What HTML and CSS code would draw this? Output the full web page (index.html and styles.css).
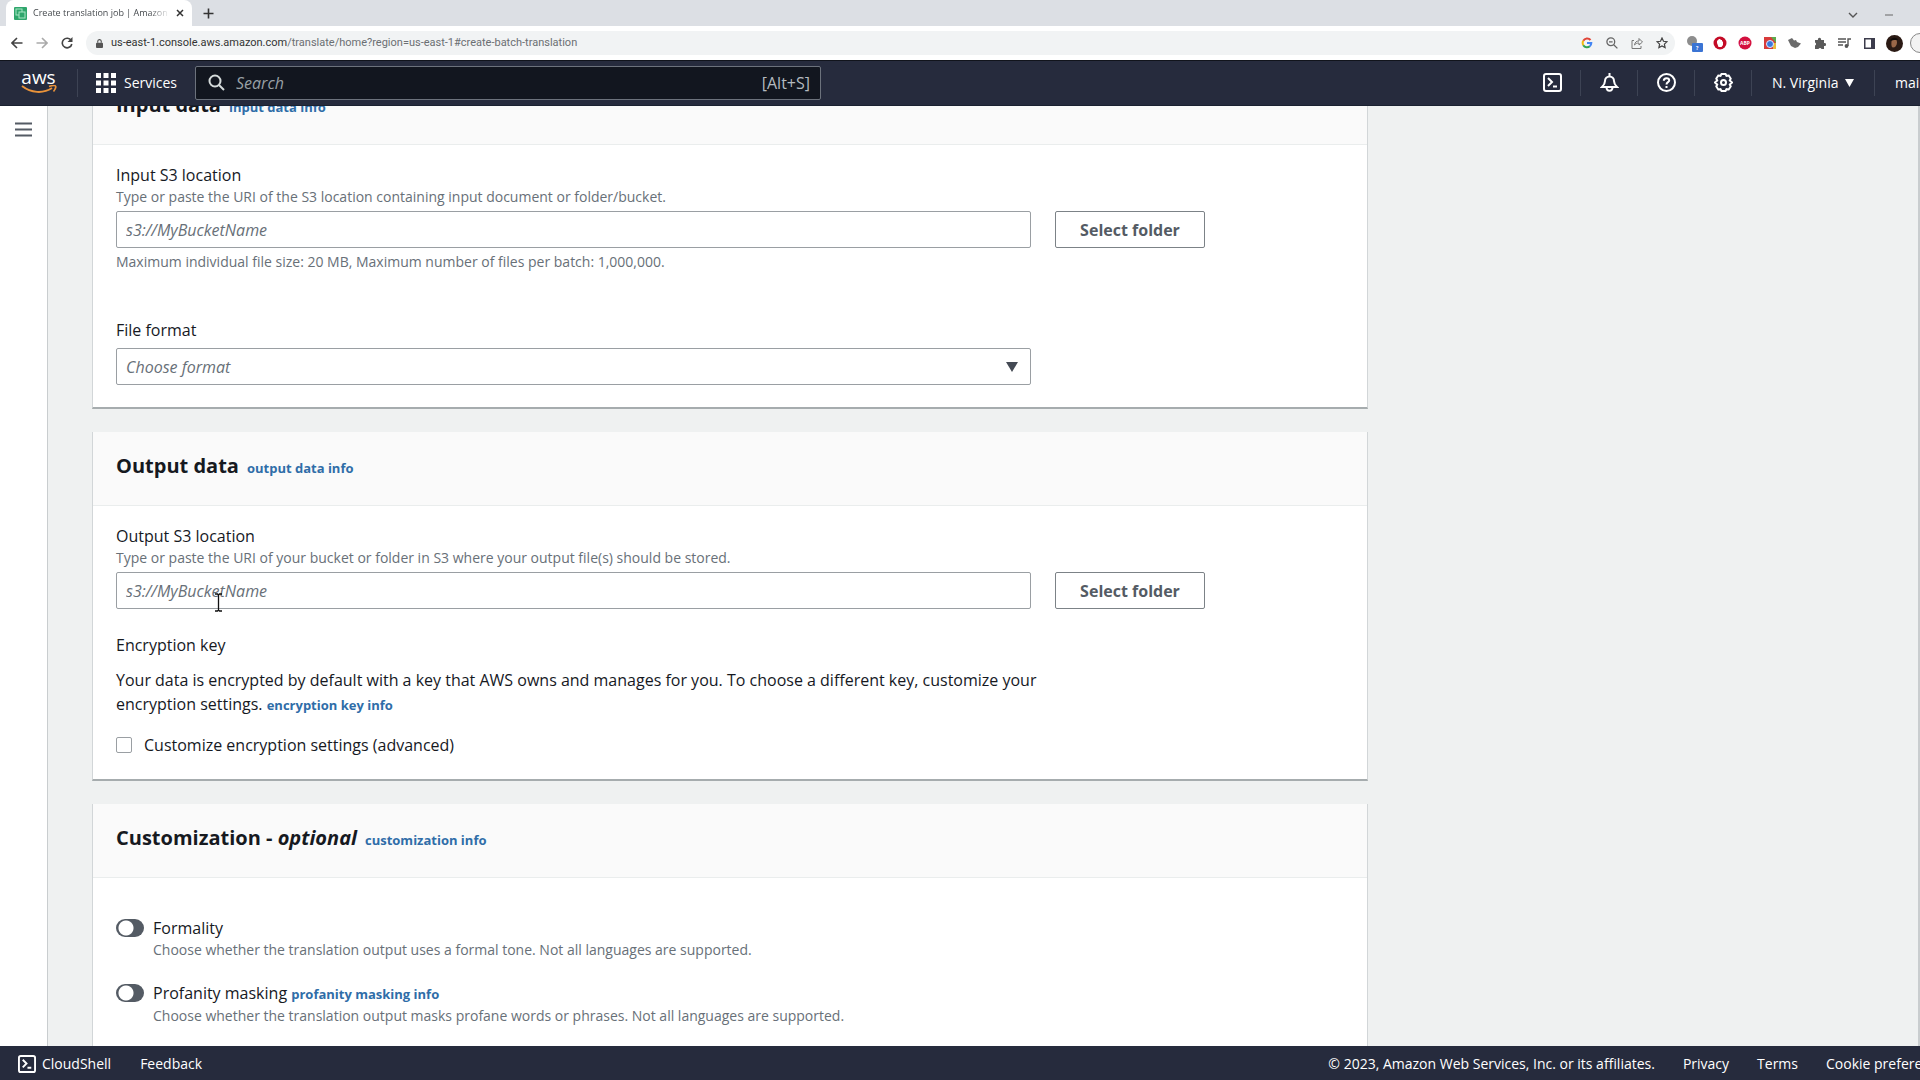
FILE: index.html
```html
<!DOCTYPE html>
<html lang="en">
<head>
    <meta charset="UTF-8">
    <meta name="viewport" content="width=device-width, initial-scale=1.0">
    <title>Create translation job | Amazon Translate</title>
    <link rel="stylesheet" href="styles.css">
</head>
<body>

    <!-- Browser tab strip -->
    <div class="tab-strip">
        <div class="tab">
            <svg width="13" height="13" viewBox="0 0 13 13"><rect width="13" height="13" rx="1" fill="#2fa66c"/><rect x="2" y="2" width="6" height="6" fill="none" stroke="#a8e6c4"/><rect x="5" y="5" width="6" height="6" fill="#2fa66c" stroke="#a8e6c4"/></svg>
            <span class="tab-title">Create translation job | Amazon</span>
            <button class="plain" aria-label="Close tab"><svg width="8" height="8" viewBox="0 0 8 8"><path d="M1 1l6 6M7 1L1 7" stroke="#333" stroke-width="1.5"/></svg></button>
        </div>
        <button class="plain new-tab" aria-label="New tab"><svg width="11" height="11" viewBox="0 0 11 11"><path d="M5.500 0.500v10M0.500 5.500h10" stroke="#333" stroke-width="1.6"/></svg></button>
        <div class="window-buttons">
            <button class="plain" aria-label="Search tabs"><svg width="10" height="10" viewBox="0 0 10 10"><path d="M1 3l4 4 4-4" fill="none" stroke="#555" stroke-width="1.4"/></svg></button>
            <button class="plain" aria-label="Minimize"><svg width="10" height="10" viewBox="0 0 10 10"><path d="M1 5h8" stroke="#666"/></svg></button>
        </div>
    </div>

    <!-- Browser toolbar -->
    <div class="toolbar">
        <button class="plain" aria-label="Back"><svg width="12" height="12" viewBox="0 0 12 12"><path d="M11.500 6H1.500M6 1L1 6l5 5" fill="none" stroke="#444" stroke-width="1.600"/></svg></button>
        <button class="plain" aria-label="Forward"><svg width="12" height="12" viewBox="0 0 12 12"><path d="M.5 6h10M6 1l5 5-5 5" fill="none" stroke="#aaa" stroke-width="1.600"/></svg></button>
        <button class="plain" aria-label="Reload"><svg width="12" height="12" viewBox="0 0 12 12"><path d="M10.200 3.500A4.800 4.800 0 1 0 10.800 7" fill="none" stroke="#444" stroke-width="1.600"/><path d="M11.500 0v5h-5z" fill="#444"/></svg></button>
        <div class="address">
            <svg width="7" height="9" viewBox="0 0 8 10"><rect y="4" width="8" height="6" rx="1" fill="#555"/><path d="M2 4V2.500a2 2 0 0 1 4 0V4" fill="none" stroke="#555" stroke-width="1.300"/></svg>
            <span class="url">us-east-1.console.aws.amazon.com<span>/translate/home?region=us-east-1#create-batch-translation</span></span>
            <div class="address-icons">
                <svg width="12" height="12" viewBox="0 0 12 12" fill="none" stroke-width="2"><path d="M9.500 3A4.300 4.300 0 0 0 2.300 3.800" stroke="#e04437"/><path d="M2.300 3.800a4.300 4.300 0 0 0 0 4.400" stroke="#f2b90f"/><path d="M2.300 8.200a4.300 4.300 0 0 0 6.500 1" stroke="#34a353"/><path d="M8.800 9.200A4.300 4.300 0 0 0 10.300 6H6" stroke="#4285f4"/></svg>
                <svg width="12" height="12" viewBox="0 0 12 12" fill="none" stroke="#666" stroke-width="1.300"><circle cx="4.800" cy="4.800" r="3.900"/><path d="M3 4.800h3.600M7.700 7.700l3.700 3.700"/></svg>
                <svg width="12" height="12" viewBox="0 0 12 12" fill="none" stroke="#777"><path d="M3 3.500H1v8h9V9"/><path d="M3.500 8c.5-3 2-4 4.500-4V1.500L11.500 5 8 8V6C6 6 5 6.500 3.500 8z"/></svg>
                <svg width="12" height="12" viewBox="0 0 12 12" fill="none" stroke="#444" stroke-width="1.200"><path d="M6 1l1.500 3.300 3.500.4-2.600 2.400.7 3.500L6 8.900l-3.100 1.700.7-3.500L1 4.700l3.500-.4z"/></svg>
            </div>
        </div>
        <div class="extensions">
            <svg width="17" height="17" viewBox="0 0 17 17"><circle cx="6" cy="6" r="5" fill="#8d8d8d"/><rect x="6" y="8" width="11" height="9" rx="1" fill="#3b74d4"/><text x="10" y="15" class="badge-text">?</text></svg>
            <svg width="14" height="14" viewBox="0 0 14 14"><circle cx="7" cy="7" r="6.500" fill="#c40b26"/><path d="M4 7V4.500h1V3.500h1V3h1v.5h1v.5h1v1.500h1V9l-1.500 2h-3z" fill="#fff"/></svg>
            <svg width="14" height="14" viewBox="0 0 14 14"><circle cx="7" cy="7" r="6.500" fill="#d3103f"/><text x="2" y="9" class="badge-text">ABP</text></svg>
            <svg width="12" height="12" viewBox="0 0 12 12"><rect width="12" height="12" fill="#d83b3b"/><path d="M7 0h5v6z" fill="#5cab4c"/><path d="M9 6h3v6H9z" fill="#e8bd3b"/><circle cx="6" cy="7" r="3.500" fill="#3c78dc" stroke="#dfe8ff"/></svg>
            <svg width="13" height="12" viewBox="0 0 13 12"><path d="M0 3l4-2 2 2.500L8 3l1 2 4 1.500L10 10l-3 1-4-2z" fill="#6b6b6b"/></svg>
            <svg width="12" height="12" viewBox="0 0 12 12"><path d="M1 3h3a1.600 1.600 0 1 1 3 0h3v3a1.600 1.600 0 1 1 0 3v3H7.500a1.600 1.600 0 0 0-3 0H1V8.500a1.600 1.600 0 0 0 0-3z" fill="#5a5a5a"/></svg>
            <svg width="13" height="12" viewBox="0 0 13 12"><path d="M0 2h8M0 5h8M0 8h5M10 9V2h3" fill="none" stroke="#555" stroke-width="1.400"/><circle cx="8.500" cy="9" r="1.900" fill="#555"/></svg>
            <svg width="11" height="11" viewBox="0 0 11 11"><rect x=".75" y=".75" width="9.500" height="9.500" fill="none" stroke="#3c3c4c" stroke-width="1.500"/><path d="M7 1h4v9H7z" fill="#3c3c4c"/></svg>
            <svg width="17" height="17" viewBox="0 0 17 17"><circle cx="8.500" cy="8.500" r="8.500" fill="#2b1a14"/><path d="M6 4.500c3-2 5 0 5 3s-2 5-4 5-2-5-1-8z" fill="#9b6748"/><path d="M4 6c1-4 7-4 8-1L8 5z" fill="#120d0b"/></svg>
        </div>
        <button class="update" aria-label="Update"></button>
    </div>

    <!-- AWS navigation -->
    <header class="aws-nav">
        <a href="#" class="logo" aria-label="AWS home">
            <span>aws</span>
            <svg width="36" height="9" viewBox="0 0 36 9"><path d="M1 1c9 7 21 8 30 2" fill="none" stroke="#e8923a" stroke-width="2"/><path d="M28 1.500c3-1 6-1 6.500-.5s0 3-2 5.500" fill="none" stroke="#e8923a" stroke-width="1.600"/></svg>
        </a>
        <button class="plain services">
            <svg width="20" height="20" viewBox="0 0 20 20" fill="#fff"><path d="M0 0h5v5H0zM7.500 0h5v5h-5zM15 0h5v5h-5zM0 7.500h5v5H0zM7.500 7.500h5v5h-5zM15 7.500h5v5h-5zM0 15h5v5H0zM7.500 15h5v5h-5zM15 15h5v5h-5z"/></svg>
            Services
        </button>
        <label class="search">
            <svg width="17" height="17" viewBox="0 0 17 17" fill="none" stroke="#d5dbdb" stroke-width="2"><circle cx="7" cy="7" r="5.500"/><path d="M11 11l5 5"/></svg>
            <input type="search" placeholder="Search" aria-label="Search">
            <span>[Alt+S]</span>
        </label>
        <div class="nav-right">
            <button class="plain nav-icon" aria-label="CloudShell"><svg width="19" height="19" viewBox="0 0 19 19" fill="none" stroke="#fff" stroke-width="2"><rect x="1" y="1" width="17" height="17" rx="2"/><path d="M5 5l4 4-4 4M10 13.500h4"/></svg></button>
            <button class="plain nav-icon" aria-label="Notifications"><svg width="19" height="19" viewBox="0 0 19 19" fill="none" stroke="#fff" stroke-width="2"><path d="M9.500 0v3M2 14c2-2 3-3 3-6a4.500 4.500 0 0 1 9 0c0 3 1 4 3 6zM6.500 14c0 5 6 5 6 0"/></svg></button>
            <button class="plain nav-icon" aria-label="Help"><svg width="19" height="19" viewBox="0 0 19 19" fill="none" stroke="#fff" stroke-width="2"><circle cx="9.500" cy="9.500" r="8.500"/><path d="M6.800 7.800c0-3.700 5.400-3.300 5.400-.4 0 1.800-2.700 1.800-2.700 4M9.500 13v2"/></svg></button>
            <button class="plain nav-icon" aria-label="Settings"><svg width="19" height="19" viewBox="0 0 19 19" fill="none" stroke="#fff" stroke-width="2"><path d="M7.500 1h4l1 1.800 2.200-.3 2 3-.9 2 2.200 2-2.200 2 .9 2-2 3-2.200-.3-1 1.800h-4l-1-1.800-2.200.3-2-3 .9-2-2.200-2 2.200-2-.9-2 2-3 2.200.3z"/><circle cx="9.500" cy="9.500" r="2.500"/></svg></button>
            <button class="plain region">N. Virginia <svg width="9" height="8" viewBox="0 0 9 8"><path d="M0 0h9L4.500 8z" fill="#fff"/></svg></button>
            <button class="plain account">main</button>
        </div>
    </header>

    <div class="page">
        <aside class="side-nav">
            <button class="plain" aria-label="Open navigation"><svg width="17" height="15" viewBox="0 0 17 15"><path d="M0 1.500h17M0 7.500h17M0 13.500h17" stroke="#545b64" stroke-width="2"/></svg></button>
        </aside>

        <main>
            <form>
                <!-- Input data -->
                <section class="panel">
                    <div class="panel-header">
                        <h2>Input data</h2>
                        <a href="#">input data info</a>
                    </div>
                    <div class="panel-body">
                        <label for="input-location">Input S3 location</label>
                        <p class="hint">Type or paste the URI of the S3 location containing input document or folder/bucket.</p>
                        <div class="field-row">
                            <div class="field"><input type="text" id="input-location" placeholder="s3://MyBucketName"></div>
                            <button type="button" class="select-folder">Select folder</button>
                        </div>
                        <p class="hint constraint">Maximum individual file size: 20 MB, Maximum number of files per batch: 1,000,000.</p>
                        <label for="file-format" class="format-label">File format</label>
                        <div class="field">
                            <select id="file-format">
                                <option>Choose format</option>
                            </select>
                            <svg class="caret" width="12" height="10" viewBox="0 0 12 10"><path d="M0 0h12L6 10z" fill="#444a54"/></svg>
                        </div>
                    </div>
                </section>

                <!-- Output data -->
                <section class="panel">
                    <div class="panel-header">
                        <h2>Output data</h2>
                        <a href="#">output data info</a>
                    </div>
                    <div class="panel-body">
                        <label for="output-location">Output S3 location</label>
                        <p class="hint">Type or paste the URI of your bucket or folder in S3 where your output file(s) should be stored.</p>
                        <div class="field-row">
                            <div class="field">
                                <input type="text" id="output-location" placeholder="s3://MyBucketName">
                                <svg class="cursor" width="9" height="19" viewBox="0 0 9 19"><path d="M1 1h2.500l1 1 1-1H8M4.500 2v15M1 18h2.500l1-1 1 1H8" fill="none" stroke="#111" stroke-width="1.300"/></svg>
                            </div>
                            <button type="button" class="select-folder">Select folder</button>
                        </div>
                        <h3>Encryption key</h3>
                        <p class="description">Your data is encrypted by default with a key that AWS owns and manages for you. To choose a different key, customize your encryption settings. <a href="#">encryption key info</a></p>
                        <label class="check">
                            <input type="checkbox">
                            Customize encryption settings (advanced)
                        </label>
                    </div>
                </section>

                <!-- Customization -->
                <section class="panel">
                    <div class="panel-header">
                        <h2>Customization - <em>optional</em></h2>
                        <a href="#">customization info</a>
                    </div>
                    <div class="panel-body toggles">
                        <div class="toggle">
                            <input type="checkbox" role="switch" id="formality">
                            <div>
                                <label for="formality">Formality</label>
                                <p class="hint">Choose whether the translation output uses a formal tone. Not all languages are supported.</p>
                            </div>
                        </div>
                        <div class="toggle">
                            <input type="checkbox" role="switch" id="profanity">
                            <div>
                                <label for="profanity">Profanity masking</label> <a href="#">profanity masking info</a>
                                <p class="hint">Choose whether the translation output masks profane words or phrases. Not all languages are supported.</p>
                            </div>
                        </div>
                    </div>
                </section>
            </form>
        </main>
    </div>

    <footer>
        <a href="#" class="cloudshell"><svg width="18" height="18" viewBox="0 0 19 19" fill="none" stroke="#fff" stroke-width="2"><rect x="1" y="1" width="17" height="17" rx="2"/><path d="M5 5l4 4-4 4M10 13.500h4"/></svg>CloudShell</a>
        <a href="#">Feedback</a>
        <div class="legal">
            <span>© 2023, Amazon Web Services, Inc. or its affiliates.</span>
            <a href="#">Privacy</a>
            <a href="#">Terms</a>
            <a href="#" class="cookies">Cookie preferences</a>
        </div>
    </footer>

</body>
</html>
```
FILE: styles.css
```css
* {
    box-sizing: border-box;
}
body {
    display: flex;
    flex-direction: column;
    height: 100vh;
    margin: 0;
    overflow: hidden;
    font-family: "Open Sans", "Noto Sans", sans-serif;
    font-size: 16px;
    line-height: 24px;
    color: #16191f;
    background-color: #eff1f1;
}
svg {
    flex: none;
}
a {
    color: #2f6da8;
    text-decoration: none;
}
h2, h3, p {
    margin: 0;
}
input, select, button {
    font-family: inherit;
    font-size: inherit;
}
.plain {
    display: flex;
    align-items: center;
    padding: 0;
    border: none;
    background: none;
    color: inherit;
}

/* Browser */
.tab-strip {
    display: flex;
    align-items: flex-end;
    flex: none;
    height: 26px;
    background-color: #dcdfe4;
}
.tab {
    display: flex;
    align-items: center;
    gap: 6px;
    width: 186px;
    height: 26px;
    margin-left: 6px;
    padding: 0 8px;
    border-radius: 8px 8px 0 0;
    background-color: #fff;
}
.tab-title {
    flex: 1;
    overflow: hidden;
    white-space: nowrap;
    font-size: 9px;
    color: #45494d;
    mask-image: linear-gradient(to right, #000 85%, transparent);
}
.new-tab {
    height: 26px;
    margin-left: 11px;
}
.window-buttons {
    display: flex;
    gap: 26px;
    height: 22px;
    margin-left: auto;
    margin-right: 26px;
}
.toolbar {
    display: flex;
    align-items: center;
    flex: none;
    height: 34px;
    padding-left: 11px;
    gap: 13px;
    overflow: hidden;
    background-color: #fff;
}
.address {
    display: flex;
    align-items: center;
    flex: 1;
    gap: 8px;
    height: 24px;
    padding: 0 7px 0 10px;
    border-radius: 12px;
    background-color: #f1f3f4;
}
.url {
    font-family: Roboto, "Open Sans", sans-serif;
    font-size: 11px;
    color: #333;
}
.url span {
    color: #6b6f73;
}
.address-icons {
    display: flex;
    gap: 13px;
    margin-left: auto;
}
.extensions {
    display: grid;
    grid-template-columns: repeat(9, 25px);
    align-items: center;
    justify-items: center;
    margin: 0 -10px 0 -6px;
}
.badge-text {
    font-size: 5px;
    font-weight: bold;
    fill: #fff;
}
.update {
    width: 24px;
    height: 20px;
    margin-right: -14px;
    border: 1px solid #888;
    border-radius: 10px;
    background-color: #f3f3f3;
}

/* AWS navigation */
.aws-nav {
    display: flex;
    align-items: center;
    flex: none;
    height: 46px;
    padding-bottom: 1px;
    border-top: 1px solid #11141c;
    border-bottom: 1px solid #1a2130;
    font-size: 14px;
    color: #fff;
    background-color: #262b3d;
}
.logo {
    display: flex;
    flex-direction: column;
    align-items: center;
    width: 78px;
    height: 28px;
    border-right: 1px solid #3d4354;
    font-size: 19px;
    line-height: 16px;
    color: #fff;
}
.services {
    gap: 8px;
    width: 117px;
    padding-left: 18px;
}
.search {
    display: flex;
    align-items: center;
    width: 626px;
    height: 34px;
    padding: 0 10px 0 12px;
    gap: 11px;
    border: 1px solid #6c727c;
    border-radius: 2px;
    font-size: 16px;
    color: #b4babf;
    background-color: #12161f;
}
.search input {
    flex: 1;
    min-width: 0;
    padding: 0;
    border: none;
    outline: none;
    color: #fff;
    background: none;
}
.search input::placeholder {
    font-style: italic;
    color: #98a0a5;
}
.nav-right {
    display: flex;
    align-items: center;
    margin-left: auto;
}
.nav-icon {
    justify-content: center;
    width: 57px;
    height: 26px;
    border-right: 1px solid #3d4354;
}
.region {
    justify-content: space-between;
    width: 123px;
    height: 26px;
    padding: 0 20px;
    border-right: 1px solid #3d4354;
}
.account {
    width: 45px;
    padding-left: 20px;
    overflow: hidden;
}

/* Page */
.page {
    display: flex;
    flex: 1;
    min-height: 0;
    border-right: 2px solid #c9cdcf;
}
.side-nav {
    flex: none;
    width: 48px;
    padding: 16px 15px;
    border-right: 1px solid #c9cdcf;
    background-color: #fff;
}
main {
    flex: 1;
    padding: 0 44px;
    overflow: hidden;
}
/* page is scrolled down to the input section */
form {
    max-width: 1276px;
    margin-top: -35px;
}
.panel {
    margin-bottom: 23px;
    border: 1px solid #d2d6d8;
    border-top: none;
    border-bottom: 2px solid #a6acae;
    background-color: #fff;
}
.panel-header {
    display: flex;
    align-items: baseline;
    gap: 8px;
    height: 74px;
    padding: 20px 23px;
    border-bottom: 1px solid #eaeded;
    background-color: #fafafa;
}
.panel-header h2 {
    font-size: 20px;
    line-height: 28px;
}
.panel a {
    font-size: 13px;
    font-weight: bold;
}
.panel-body {
    padding: 18px 23px 22px;
}
.panel-body label {
    display: block;
}
.hint {
    font-size: 14px;
    line-height: 20px;
    color: #687078;
}
.field-row {
    display: flex;
    gap: 24px;
}
.field {
    position: relative;
    width: 915px;
    margin-top: 4px;
}
.field input, .field select {
    display: block;
    width: 100%;
    height: 37px;
    padding: 0 9px;
    border: 1px solid #9a9fa3;
    border-radius: 2px;
    background-color: #fff;
}
.field input::placeholder, .field select {
    font-style: italic;
    color: #687078;
    opacity: 1;
}
.field select {
    appearance: none;
}
.caret {
    position: absolute;
    top: 14px;
    right: 13px;
}
.cursor {
    position: absolute;
    top: 21px;
    left: 98px;
}
.select-folder {
    width: 150px;
    height: 37px;
    margin-top: 4px;
    padding: 0;
    border: 1px solid #7c8287;
    border-radius: 2px;
    font-weight: bold;
    color: #545b64;
    background-color: #fff;
}
.constraint {
    margin-top: 4px;
}
.panel-body .format-label {
    margin-top: 46px;
    margin-bottom: 6px;
}
.panel-body h3 {
    margin-top: 24px;
    font-size: 16px;
    font-weight: normal;
}
.description {
    max-width: 940px;
    margin-top: 11px;
}
.panel-body .check {
    display: flex;
    align-items: center;
    gap: 12px;
    margin-top: 16px;
}
.check input {
    appearance: none;
    width: 16px;
    height: 16px;
    margin: 0;
    border: 1px solid #9a9fa3;
    border-radius: 2px;
}
.toggles {
    display: flex;
    flex-direction: column;
    gap: 21px;
    padding-top: 38px;
}
.toggle {
    display: flex;
    gap: 9px;
}
.toggle label {
    display: inline;
}
.toggle input {
    appearance: none;
    flex: none;
    width: 28px;
    height: 18px;
    margin: 3px 0 0;
    border-radius: 9px;
    background: radial-gradient(circle at 10px 9px, #fff 7px, #545b64 8px);
}

/* Footer */
footer {
    display: flex;
    align-items: center;
    flex: none;
    gap: 29px;
    height: 34px;
    padding: 2px 0 0 18px;
    font-size: 14px;
    white-space: nowrap;
    color: #fff;
    background-color: #262b3d;
}
footer a {
    color: #fff;
}
.cloudshell {
    display: flex;
    align-items: center;
    gap: 6px;
}
.legal {
    display: flex;
    margin-left: auto;
    gap: 28px;
}
.cookies {
    width: 94px;
    overflow: hidden;
}
```
